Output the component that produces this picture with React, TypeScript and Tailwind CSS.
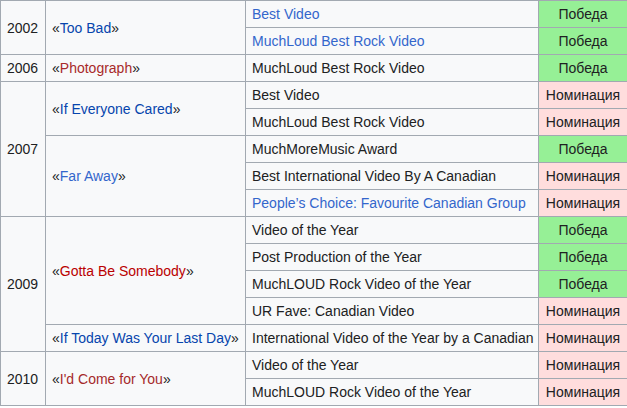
import React from "react";

type Award = { name: string; link?: boolean; win: boolean };
type Song = { title: string; color: string; awards: Award[] };
type Year = { year: string; songs: Song[] };

const data: Year[] = [
  {
    year: "2002",
    songs: [
      {
        title: "Too Bad",
        color: "text-[#0645ad]",
        awards: [
          { name: "Best Video", link: true, win: true },
          { name: "MuchLoud Best Rock Video", link: true, win: true },
        ],
      },
    ],
  },
  {
    year: "2006",
    songs: [
      {
        title: "Photograph",
        color: "text-[#a82a2a]",
        awards: [{ name: "MuchLoud Best Rock Video", win: true }],
      },
    ],
  },
  {
    year: "2007",
    songs: [
      {
        title: "If Everyone Cared",
        color: "text-[#0645ad]",
        awards: [
          { name: "Best Video", win: false },
          { name: "MuchLoud Best Rock Video", win: false },
        ],
      },
      {
        title: "Far Away",
        color: "text-[#3366cc]",
        awards: [
          { name: "MuchMoreMusic Award", win: true },
          { name: "Best International Video By A Canadian", win: false },
          { name: "People\u2019s Choice: Favourite Canadian Group", link: true, win: false },
        ],
      },
    ],
  },
  {
    year: "2009",
    songs: [
      {
        title: "Gotta Be Somebody",
        color: "text-[#ba0000]",
        awards: [
          { name: "Video of the Year", win: true },
          { name: "Post Production of the Year", win: true },
          { name: "MuchLOUD Rock Video of the Year", win: true },
          { name: "UR Fave: Canadian Video", win: false },
        ],
      },
      {
        title: "If Today Was Your Last Day",
        color: "text-[#0645ad]",
        awards: [{ name: "International Video of the Year by a Canadian", win: false }],
      },
    ],
  },
  {
    year: "2010",
    songs: [
      {
        title: "I'd Come for You",
        color: "text-[#a52a2a]",
        awards: [
          { name: "Video of the Year", win: false },
          { name: "MuchLOUD Rock Video of the Year", win: false },
        ],
      },
    ],
  },
];

const cell = "border border-[#a2a9b1] px-[6px] py-0 align-middle h-[27px] leading-[20px] whitespace-nowrap";

export default function App() {
  const rows: React.ReactNode[] = [];
  data.forEach((y, yi) => {
    const yearSpan = y.songs.reduce((n, s) => n + s.awards.length, 0);
    y.songs.forEach((s, si) => {
      s.awards.forEach((a, ai) => {
        rows.push(
          <tr key={`${yi}-${si}-${ai}`} className="h-[27px]">
            {si === 0 && ai === 0 && (
              <td rowSpan={yearSpan} className={`${cell} text-left`}>
                {y.year}
              </td>
            )}
            {ai === 0 && (
              <td rowSpan={s.awards.length} className={`${cell} text-left`}>
                «<span className={s.color}>{s.title}</span>»
              </td>
            )}
            <td className={`${cell} text-left ${a.link ? "text-[#3366cc]" : ""}`}>{a.name}</td>
            <td
              className={`${cell} text-center ${a.win ? "bg-[#96f096]" : "bg-[#ffdddd]"} px-[4px]`}
            >
              {a.win ? "Победа" : "Номинация"}
            </td>
          </tr>
        );
      });
    });
  });

  return (
    <div className="w-[627px] h-[408px] overflow-hidden bg-white">
      <table
        className="table-fixed border-collapse bg-[#f8f9fa] text-[14px] text-[#202122] w-[627px]"
        style={{ fontFamily: '"Liberation Sans", Arial, sans-serif' }}
      >
        <colgroup>
          <col className="w-[45px]" />
          <col className="w-[200px]" />
          <col className="w-[293px]" />
          <col className="w-[89px]" />
        </colgroup>
        <tbody>{rows}</tbody>
      </table>
    </div>
  );
}
